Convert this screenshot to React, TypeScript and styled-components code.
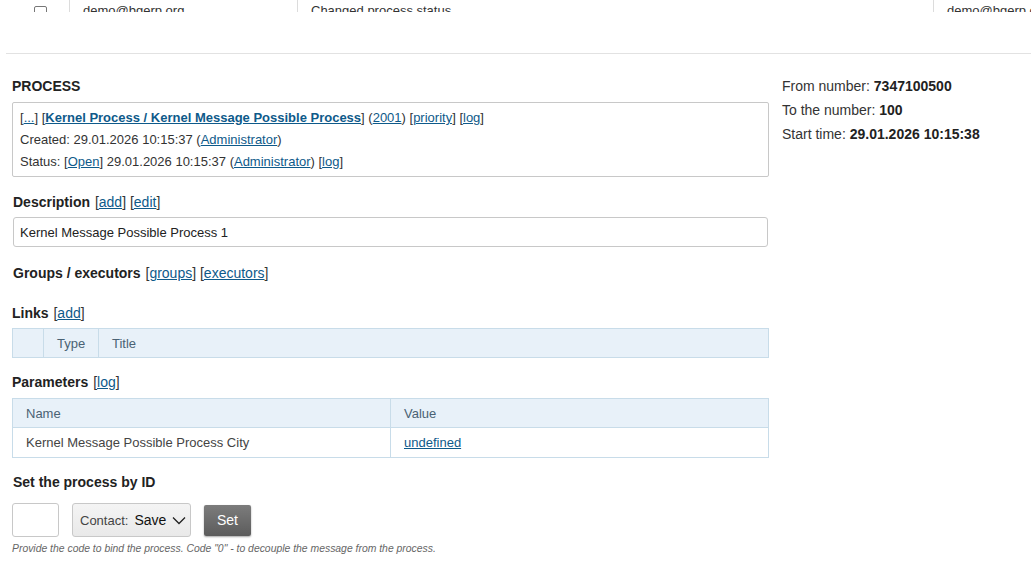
import React from 'react';
import styled, { createGlobalStyle } from 'styled-components';

const GlobalStyle = createGlobalStyle`
  body {
    margin: 0;
    background: #fff;
    font-family: "Liberation Sans", Arial, sans-serif;
    font-size: 13px;
    color: #333;
  }
`;

const Page = styled.div`
  width: 1031px;
  overflow: hidden;
`;

/* table row cut off by the scroll above */
const TopStrip = styled.div`
  height: 12px;
  overflow: hidden;
  display: grid;
  grid-template-columns: 69px 228px 636px 1fr;
`;

const TopCell = styled.div<{ $first?: boolean }>`
  border-left: ${(p) => (p.$first ? 'none' : '1px solid #dcdcdc')};
  padding: 3px 0 0 13px;
  line-height: 16px;
  white-space: nowrap;
  overflow: hidden;
`;

const FakeCheck = styled.div`
  width: 11px;
  height: 11px;
  margin: 3px 0 0 21px;
  border: 1px solid #777;
  border-radius: 2px;
`;

const Divider = styled.div`
  margin: 41px 0 0 6px;
  border-top: 1px solid #e2e2e2;
`;

const Main = styled.div`
  display: flex;
  padding: 24px 0 0 12px;
`;

const LeftCol = styled.div`
  width: 757px;
`;

const RightCol = styled.div`
  margin-left: 13px;
  font-size: 14px;
  color: #333;
`;

const InfoLine = styled.div`
  line-height: 16px;
  margin-bottom: 8px;
  b {
    color: #222;
  }
`;

const Heading = styled.div<{ $top?: number; $indent?: boolean }>`
  margin-top: ${(p) => p.$top ?? 0}px;
  padding-left: ${(p) => (p.$indent ? 1 : 0)}px;
  font-size: 14px;
  line-height: 16px;
  color: #222;
  b {
    font-weight: bold;
    margin-right: 1px;
  }
  span {
    font-weight: normal;
    color: #333;
  }
`;

const Link = styled.a`
  color: #0e5a8a;
  text-decoration: underline;
  cursor: pointer;
`;

const ProcessBox = styled.div`
  margin-top: 8px;
  border: 1px solid #c8c8c8;
  border-radius: 2px;
  padding: 4px 7px 3px;
  line-height: 22px;
`;

const DescInput = styled.div`
  margin: 7px 1px 0 1px;
  border: 1px solid #c8c8c8;
  border-radius: 3px;
  padding: 1px 6px 0;
  line-height: 28px;
  color: #222;
  height: 27px;
`;

const Table = styled.table<{ $top?: number }>`
  margin-top: ${(p) => p.$top ?? 7}px;
  width: 100%;
  border-collapse: collapse;
  table-layout: fixed;
`;

const Th = styled.th<{ $w?: number }>`
  box-sizing: border-box;
  width: ${(p) => (p.$w ? `${p.$w}px` : 'auto')};
  height: 29px;
  padding: 0 13px;
  background: #e8f1f9;
  border: 1px solid #c8dce9;
  text-align: left;
  font-weight: normal;
  color: #4a6274;
`;

const Td = styled.td`
  height: 29px;
  padding: 0 13px;
  border: 1px solid #c8dce9;
  color: #444;
`;

const Controls = styled.div`
  margin-top: 13px;
  display: flex;
  align-items: center;
`;

const CodeInput = styled.input`
  box-sizing: border-box;
  width: 47px;
  height: 34px;
  border: 1px solid #c8c8c8;
  border-radius: 3px;
`;

const Select = styled.div`
  box-sizing: border-box;
  margin-left: 13px;
  width: 119px;
  height: 34px;
  display: flex;
  align-items: center;
  padding: 0 7px;
  background: linear-gradient(#f4f4f4, #e9e9e9);
  border: 1px solid #c8c8c8;
  border-radius: 3px;
  font-size: 13px;
  color: #444;
  white-space: nowrap;
  strong {
    font-weight: normal;
    color: #111;
    font-size: 14px;
    margin-left: 6px;
  }
  svg {
    flex-shrink: 0;
    margin-left: 6px;
  }
`;

const SetButton = styled.button`
  margin-left: 13px;
  width: 47px;
  height: 31px;
  border: none;
  border-radius: 2px;
  background: linear-gradient(#7c7c7c, #5c5c5c);
  box-shadow: 0 1px 2px rgba(0, 0, 0, 0.35);
  color: #fff;
  font-family: inherit;
  font-size: 14px;
`;

const Hint = styled.div`
  margin-top: 6px;
  font-size: 10.4px;
  font-style: italic;
  color: #666;
`;

const Chevron = () => (
  <svg width="14" height="9" viewBox="0 0 14 9" fill="none" stroke="#222" strokeWidth="1.3">
    <path d="M1 1.5 L7 7.5 L13 1.5" />
  </svg>
);

export default function App() {
  return (
    <Page>
      <GlobalStyle />
      <TopStrip>
        <TopCell $first>
          <FakeCheck />
        </TopCell>
        <TopCell>demo@bgerp.org</TopCell>
        <TopCell>Changed process status</TopCell>
        <TopCell>demo@bgerp.org</TopCell>
      </TopStrip>
      <Divider />
      <Main>
        <LeftCol>
          <Heading>
            <b>PROCESS</b>
          </Heading>
          <ProcessBox>
            <div>
              [<Link>...</Link>] [<Link><b>Kernel Process / Kernel Message Possible Process</b></Link>] (
              <Link>2001</Link>) [<Link>priority</Link>] [<Link>log</Link>]
            </div>
            <div>
              Created: 29.01.2026 10:15:37 (<Link>Administrator</Link>)
            </div>
            <div>
              Status: [<Link>Open</Link>] 29.01.2026 10:15:37 (<Link>Administrator</Link>) [<Link>log</Link>]
            </div>
          </ProcessBox>

          <Heading $top={17} $indent>
            <b>Description</b> <span>[<Link>add</Link>] [<Link>edit</Link>]</span>
          </Heading>
          <DescInput>Kernel Message Possible Process 1</DescInput>

          <Heading $top={18} $indent>
            <b>Groups / executors</b> <span>[<Link>groups</Link>] [<Link>executors</Link>]</span>
          </Heading>

          <Heading $top={24}>
            <b>Links</b> <span>[<Link>add</Link>]</span>
          </Heading>
          <Table>
            <thead>
              <tr>
                <Th $w={31} />
                <Th $w={55}>Type</Th>
                <Th>Title</Th>
              </tr>
            </thead>
          </Table>

          <Heading $top={16}>
            <b>Parameters</b> <span>[<Link>log</Link>]</span>
          </Heading>
          <Table $top={8}>
            <thead>
              <tr>
                <Th $w={378}>Name</Th>
                <Th>Value</Th>
              </tr>
            </thead>
            <tbody>
              <tr>
                <Td>Kernel Message Possible Process City</Td>
                <Td>
                  <Link>undefined</Link>
                </Td>
              </tr>
            </tbody>
          </Table>

          <Heading $top={16} $indent>
            <b>Set the process by ID</b>
          </Heading>
          <Controls>
            <CodeInput />
            <Select>
              Contact:<strong>Save</strong>
              <Chevron />
            </Select>
            <SetButton>Set</SetButton>
          </Controls>
          <Hint>Provide the code to bind the process. Code "0" - to decouple the message from the process.</Hint>
        </LeftCol>
        <RightCol>
          <InfoLine>
            From number: <b>7347100500</b>
          </InfoLine>
          <InfoLine>
            To the number: <b>100</b>
          </InfoLine>
          <InfoLine>
            Start time: <b>29.01.2026 10:15:38</b>
          </InfoLine>
        </RightCol>
      </Main>
    </Page>
  );
}
